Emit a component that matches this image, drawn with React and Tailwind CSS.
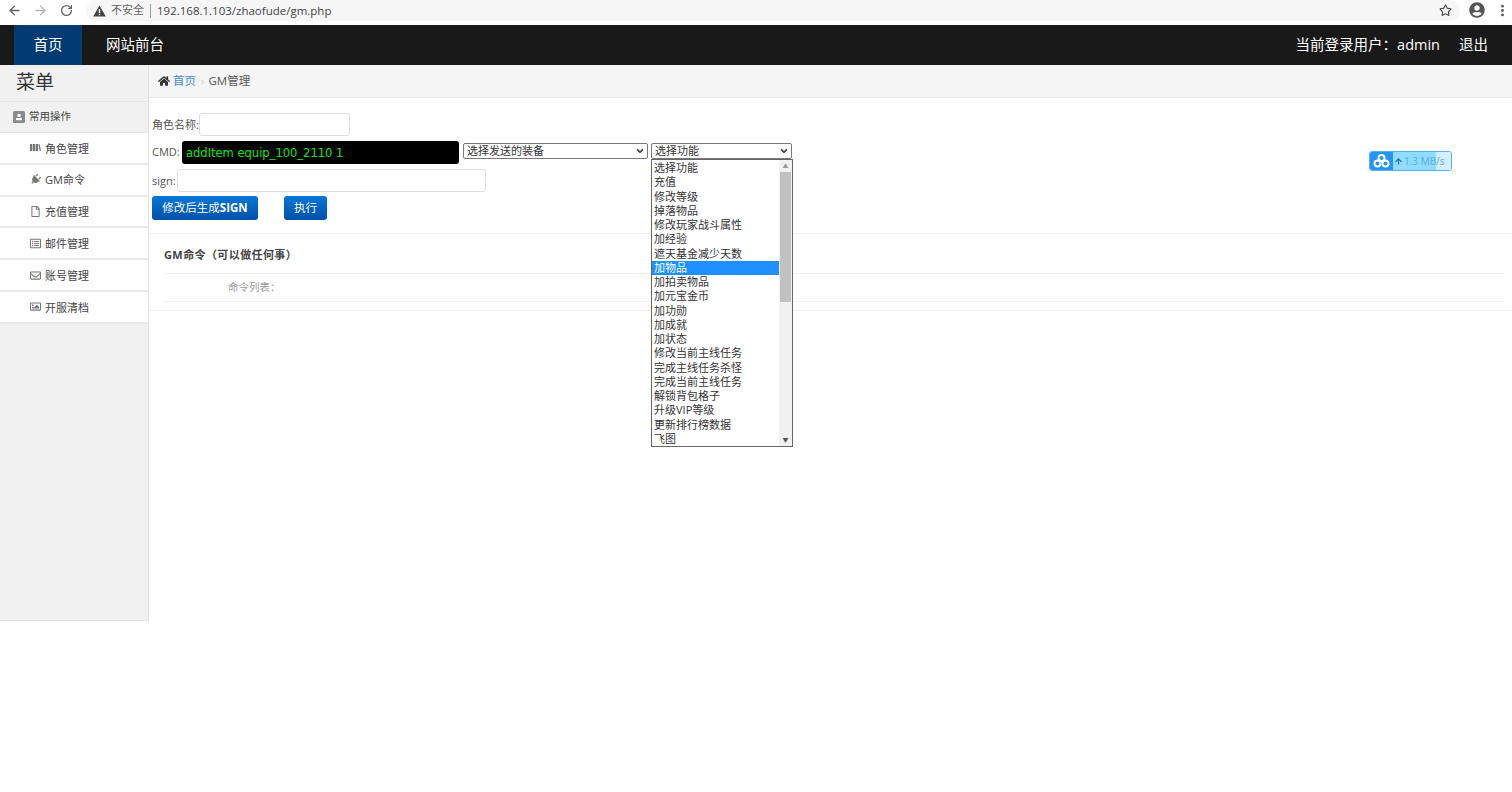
import React from "react";
import { ArrowLeft, ArrowRight, RotateCw, Star, EllipsisVertical, ChevronDown, ArrowUp } from "lucide-react";
import { FaHome, FaPlug, FaRegEnvelope, FaRegFile, FaRegImage, FaRegListAlt, FaUserCircle } from "react-icons/fa";

const FONT = "font-['Open_Sans','Noto_Sans_CJK_SC',sans-serif]";

const BooksIcon = ({ className }) => (
  <svg width="11" height="11" viewBox="0 0 11 11" fill="currentColor" className={className}>
    <rect x="0" y="2" width="2.4" height="7" />
    <rect x="3" y="2" width="2.4" height="7" />
    <rect x="6" y="2" width="2" height="7" />
    <path d="M8.4 2.4 L9.6 2 L11 8.6 L9.8 9 Z" />
  </svg>
);

const menuItems = [
  { label: "角色管理", icon: BooksIcon, extra: "" },
  { label: "GM命令", icon: FaPlug, extra: "rotate-45" },
  { label: "充值管理", icon: FaRegFile, extra: "" },
  { label: "邮件管理", icon: FaRegListAlt, extra: "" },
  { label: "账号管理", icon: FaRegEnvelope, extra: "" },
  { label: "开服清档", icon: FaRegImage, extra: "" },
];

const options = [
  "选择功能", "充值", "修改等级", "掉落物品", "修改玩家战斗属性", "加经验", "遮天基金减少天数",
  "加物品", "加拍卖物品", "加元宝金币", "加功勋", "加成就", "加状态", "修改当前主线任务",
  "完成主线任务杀怪", "完成当前主线任务", "解锁背包格子", "升级VIP等级", "更新排行榜数据", "飞图",
];

const BrowserBar = () => (
  <div className="h-[25px] flex items-start bg-white text-[#5f6368]">
    <div className="h-[20px] flex items-center">
      <ArrowLeft size={15} className="ml-[7px]" strokeWidth={2.2} />
      <ArrowRight size={15} className="ml-[11px] text-[#b4b4b4]" strokeWidth={2.2} />
      <RotateCw size={13} className="ml-[12px]" strokeWidth={2.4} />
    </div>
    <div className="ml-[13px] flex-1 h-[21px] flex items-center bg-[#f6f6f6] rounded-l-full rounded-r-full pl-[7px]">
      <svg width="13" height="12" viewBox="0 0 13 12">
        <path d="M6.5 0.5 L12.8 11.5 L0.2 11.5 Z" fill="#444" />
        <rect x="5.8" y="4" width="1.4" height="4" fill="white" />
        <rect x="5.8" y="8.8" width="1.4" height="1.4" fill="white" />
      </svg>
      <span className="ml-[5px] text-[11px] text-[#666]">不安全</span>
      <span className="ml-[6px] w-px h-[14px] bg-[#999]"></span>
      <span className="ml-[6px] text-[11.5px] text-[#444]">192.168.1.103/zhaofude/gm.php</span>
      <Star size={13} className="ml-auto mr-[8px] text-[#444]" strokeWidth={2} />
    </div>
    <div className="h-[20px] flex items-center">
      <FaUserCircle size={16} className="ml-[9px] text-[#555]" />
      <EllipsisVertical size={15} className="ml-[10px] mr-[2px] text-[#555]" strokeWidth={2.6} />
    </div>
  </div>
);

const Navbar = () => (
  <div className="h-[40px] flex items-center bg-[#191919] text-white text-[14.5px]">
    <a className="ml-[14px] w-[68px] h-full flex items-center justify-center bg-[#023b71]">首页</a>
    <a className="ml-[24px]">网站前台</a>
    <span className="ml-auto">当前登录用户：admin</span>
    <a className="ml-[19px] mr-[24px]">退出</a>
  </div>
);

const Sidebar = () => (
  <div className="w-[149px] h-[556px] shrink-0 bg-[#f1f1f1] border-r border-b border-[#e2e2e2]">
    <div className="h-[36px] pl-[16px] text-[19px] leading-[34px] text-[#333]">菜单</div>
    <div className="h-[32px] flex items-center pl-[13px] border-b border-t border-[#e6e6e6] text-[10.5px] text-[#444]">
      <svg width="12" height="12" viewBox="0 0 12 12">
        <rect width="12" height="12" rx="1.5" fill="#8a8a8a" />
        <circle cx="6" cy="4.5" r="1.8" fill="white" />
        <rect x="3" y="7" width="6" height="2.2" fill="white" />
      </svg>
      <span className="ml-[4px]">常用操作</span>
    </div>
    {menuItems.map(({ label, icon: Icon, extra }) => (
      <div key={label} className="h-[31.8px] flex items-center pl-[30px] bg-white border-b-2 border-[#e9e9e9] text-[11px] text-[#444]">
        <Icon size={11} className={`text-[#777] ${extra}`} />
        <span className="ml-[4px] pt-[2px]">{label}</span>
      </div>
    ))}
  </div>
);

const Form = () => (
  <div className="pt-[15px] pl-[3px] text-[11px] text-[#555]">
    <div className="h-[23px] flex items-center">
      <span className="w-[47px] pt-[1px]">角色名称:</span>
      <input className="w-[151px] h-[23px] bg-white border border-[#ddd] rounded-[3px]" />
    </div>
    <div className="mt-[5px] h-[23px] flex items-center">
      <span className="w-[30px]">CMD:</span>
      <div className="w-[277px] h-[23px] flex items-center pl-[4px] pt-[2px] bg-black rounded-[3px] text-[#14e614] text-[11.5px] font-['DejaVu_Sans',sans-serif]">addItem equip_100_2110 1</div>
      <div className="ml-[4px] self-start mt-[2px] w-[185px] h-[16px] flex items-center justify-between pl-[3px] pr-[2px] bg-white border border-[#777] rounded-[2px] text-[#333]">
        <span className="pt-[1px]">选择发送的装备</span>
        <ChevronDown size={10} strokeWidth={4} />
      </div>
      <div className="relative ml-[3px] self-start mt-[2px] w-[141px] h-[16px] flex items-center justify-between pl-[3px] pr-[2px] bg-white border border-[#777] rounded-[2px] text-[#333]">
        <span className="pt-[1px]">选择功能</span>
        <ChevronDown size={10} strokeWidth={4} />
        <div className="absolute left-[-1px] top-[15px] w-[142px] h-[288px] flex bg-white border border-[#666] z-10 text-[11px]">
          <div className="flex-1 pt-[1px]">
            {options.map((o) => (
              <div key={o} className={o === "加物品" ? "h-[14.25px] leading-[14px] pl-[2px] bg-[#1e90ff] text-white" : "h-[14.25px] leading-[14px] pl-[2px]"}>{o}</div>
            ))}
          </div>
          <div className="w-[13px] bg-[#f1f1f1] flex flex-col">
            <div className="h-[12px] flex items-center justify-center text-[6px] text-[#999]">▲</div>
            <div className="h-[130px] mx-px bg-[#c1c1c1]"></div>
            <div className="mt-auto h-[12px] flex items-center justify-center text-[6px] text-[#555]">▼</div>
          </div>
        </div>
      </div>
    </div>
    <div className="mt-[5px] h-[23px] flex items-center">
      <span className="w-[25px] pt-[2px]">sign:</span>
      <input className="w-[309px] h-[23px] bg-white border border-[#ddd] rounded-[3px]" />
    </div>
    <div className="mt-[4px] flex">
      <button className="w-[106px] h-[24px] rounded-[3px] bg-linear-to-b from-[#0a78d8] to-[#0050a8] text-white text-[11.5px]">修改后生成<b>SIGN</b></button>
      <button className="ml-[26px] w-[43px] h-[24px] rounded-[3px] bg-linear-to-b from-[#0a78d8] to-[#0050a8] text-white text-[11.5px]">执行</button>
    </div>
  </div>
);

const GmPanel = () => (
  <div className="mt-[13px] h-[78px] border-y border-[#eee] pl-[15px] pr-[8px]">
    <div className="h-[40px] flex items-center pt-[3px] border-b border-[#f2f2f2] text-[11px] font-bold tracking-[0.4px] text-[#444]">GM命令（可以做任何事）</div>
    <div className="h-[28px] flex items-center pt-[1px] pl-[64px] border-b border-[#f2f2f2] text-[10.5px] text-[#999]">命令列表：</div>
  </div>
);

const SpeedBadge = () => (
  <div className="absolute left-[1220px] top-[86px] w-[83px] h-[20px] flex rounded-[3px] border border-[#5cb0f5] overflow-hidden">
    <div className="w-[23px] flex items-center justify-center bg-[#2196f3]">
      <svg width="17" height="14" viewBox="0 0 17 14" fill="none" stroke="white" strokeWidth="2">
        <circle cx="8.5" cy="4" r="3" />
        <circle cx="4.5" cy="9.5" r="3" />
        <circle cx="12.5" cy="9.5" r="3" />
      </svg>
    </div>
    <div className="flex-1 flex items-center bg-linear-to-r from-[#8fdcff] from-75% to-[#d2efff] to-75% pl-[1px] text-[10px] text-[#5aa9e6]">
      <ArrowUp size={9} className="text-[#1c6fb0]" strokeWidth={3} />
      <span className="ml-[1px]">1.3 MB/s</span>
    </div>
  </div>
);

const App = () => (
  <div className={`w-[1512px] h-[792px] overflow-hidden bg-white ${FONT}`}>
    <BrowserBar />
    <Navbar />
    <div className="flex items-start">
      <Sidebar />
      <div className="relative flex-1">
        <div className="h-[33px] flex items-center pl-[9px] bg-[#f5f5f5] border-b border-[#e8e8e8] text-[11.5px]">
          <FaHome size={12} className="text-[#333]" />
          <span className="ml-[3px] text-[#428bca]">首页</span>
          <span className="ml-[5px] text-[#ccc]">›</span>
          <span className="ml-[4px] text-[#555]">GM管理</span>
        </div>
        <Form />
        <GmPanel />
        <SpeedBadge />
      </div>
    </div>
  </div>
);

export default App;
